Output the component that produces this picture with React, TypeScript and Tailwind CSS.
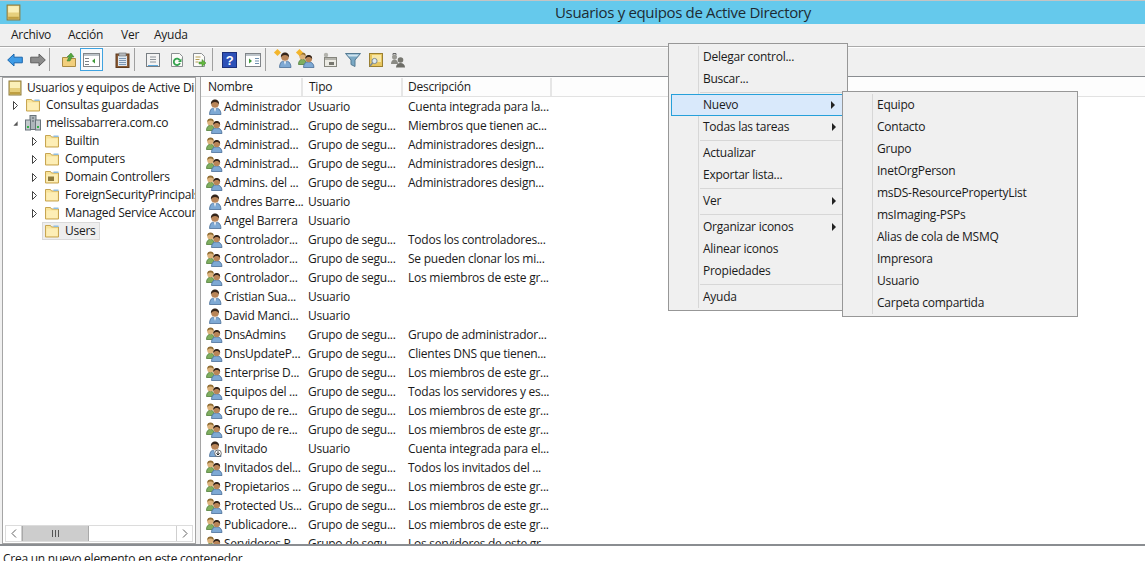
import React from 'react';

const uiFont = "font-['Open_Sans','Noto_Sans',sans-serif]";

function Vault({ size = 16 }: { size?: number }) {
  return (
    <svg width={size} height={size} viewBox="0 0 16 16" className="shrink-0">
      <rect x="2" y="1" width="12" height="14" fill="#e6cf7c" stroke="#8d7a3c" />
      <rect x="3" y="2" width="10" height="6" fill="#fbf0b8" />
      <rect x="3" y="12" width="10" height="2" fill="#bf9f42" />
    </svg>
  );
}

function Folder({ dc = false }: { dc?: boolean }) {
  return (
    <svg width="16" height="16" viewBox="0 0 16 16" className="shrink-0">
      <path d="M1.500 2.500h5l1 1.500h7v10h-13z" fill="#f9e49a" stroke="#c7a552" />
      <path d="M2.500 5.500h11v7.500h-11z" fill="#fdeeb6" />
      <path d="M9.500 2.500h5v1.500h-5z" fill="#8fbde0" />
      {dc && <rect x="4" y="7.500" width="6" height="4.500" fill="#8d7a3c" />}
    </svg>
  );
}

function Domain() {
  return (
    <svg width="16" height="16" viewBox="0 0 16 16" className="shrink-0">
      <rect x="5" y=".5" width="6" height="14" fill="#aeb6bb" stroke="#68737a" />
      <rect x=".5" y="5" width="5" height="10" fill="#c3cacd" stroke="#68737a" />
      <rect x="10.500" y="5" width="5" height="10" fill="#c3cacd" stroke="#68737a" />
      <rect x="2" y="11" width="2" height="2" fill="#35b34a" />
      <rect x="12" y="11" width="2" height="2" fill="#35b34a" />
      <rect x="7" y="2.500" width="2" height="1" fill="#566067" />
      <rect x="7" y="5.500" width="2" height="1" fill="#566067" />
    </svg>
  );
}

function UserIcon({ disabled = false }: { disabled?: boolean }) {
  return (
    <svg width="16" height="16" viewBox="0 0 16 16" className="shrink-0">
      <path d="M3.500 15.500c0-3.800 1.800-6 3-6.300l2.500 1.300 2.500-1.300c1.500.4 3.500 2.500 3.500 6.300z" fill="#7ea9d4" stroke="#4a6f98" strokeWidth="0.8" />
      <path d="M8 10l1 3 1-3z" fill="#eef3f8" />
      <circle cx="9" cy="5" r="3.800" fill="#b98558" />
      <path d="M5 5.500C4.500 2 6.800.5 9 .5s4.500 1.500 4 5c-1-2-2.400-2.600-4-2.600S6 3.500 5 5.500z" fill="#33241a" />
      {disabled && (
        <g>
          <circle cx="12" cy="12.300" r="3.300" fill="#fff" stroke="#555" strokeWidth="0.8" />
          <path d="M12 10.300v3.500M10.500 12.300l1.500 1.700 1.500-1.700" stroke="#222" fill="none" strokeWidth="1" />
        </g>
      )}
    </svg>
  );
}

function GroupIcon() {
  return (
    <svg width="17" height="16" viewBox="0 0 17 16" className="shrink-0">
      <path d="M.5 12.500c0-3.200 1.500-5.200 4-5.200s4 2 4 5.200z" fill="#7fae5f" stroke="#4f7d38" strokeWidth="0.8" />
      <circle cx="4.500" cy="4.200" r="3.200" fill="#dcb27a" />
      <path d="M1.300 4.300C1 1.500 2.700.5 4.500.5s3.500 1 3.200 3.800c-.8-1.400-1.900-1.900-3.200-1.900s-2.400.5-3.200 1.900z" fill="#8f6c32" />
      <path d="M5.500 15.500c0-3.700 1.900-5.700 5-5.700s5.500 2 5.500 5.700z" fill="#7ea9d4" stroke="#4a6f98" strokeWidth="0.8" />
      <circle cx="10.700" cy="6.800" r="3.400" fill="#b98558" />
      <path d="M7.300 7c-.3-3 1.500-4 3.400-4s3.700 1 3.400 4c-1-1.500-2-2-3.400-2s-2.400.5-3.400 2z" fill="#33241a" />
    </svg>
  );
}

function Arrow({ dir, fill, stroke }: { dir: 'l' | 'r'; fill: string; stroke: string }) {
  return (
    <svg width="16" height="14" viewBox="0 0 16 14">
      <path
        d={dir === 'l' ? 'M.7 7L7 1v3.200h8.300v5.600H7V13z' : 'M15.300 7L9 1v3.200H.7v5.600H9V13z'}
        fill={fill}
        stroke={stroke}
      />
    </svg>
  );
}

function PageTool({ children }: { children?: React.ReactNode }) {
  return (
    <svg width="16" height="16" viewBox="0 0 16 16">
      <path d="M2.500 1.500h8l3 3v10h-11z" fill="#fbfbf8" stroke="#8b8f92" />
      {children}
    </svg>
  );
}

function Star() {
  return <span className="absolute -left-[1px] -top-[2px] h-[5px] w-[5px] rotate-45 bg-[#f3b52c]" />;
}

const toolbar: { w?: number; ml?: number; node?: React.ReactNode; sep?: boolean; active?: boolean }[] = [
  { w: 23, node: <Arrow dir="l" fill="#3e9be6" stroke="#1b66ad" /> },
  { w: 23, node: <Arrow dir="r" fill="#8b8b8b" stroke="#5f5f5f" /> },
  { sep: true },
  {
    w: 23,
    ml: 7,
    node: (
      <svg width="16" height="16" viewBox="0 0 16 16">
        <path d="M1.500 5.500h5l1 1h7v8h-13z" fill="#f2cf7c" stroke="#a98a42" />
        <path d="M6 9l2-4H6l4-4 3 4h-2l-2 4z" fill="#55a63e" stroke="#35782a" strokeWidth="0.5" />
      </svg>
    ),
  },
  {
    w: 23,
    active: true,
    node: (
      <svg width="17" height="14" viewBox="0 0 17 14">
        <rect x=".5" y=".5" width="16" height="13" fill="#fff" stroke="#808488" />
        <rect x="1" y="1" width="15" height="2" fill="#bcc3c9" />
        <rect x="2" y="5" width="4" height="1" fill="#7a8086" />
        <rect x="2" y="8" width="4" height="1" fill="#7a8086" />
        <rect x="2" y="11" width="4" height="1" fill="#7a8086" />
        <path d="M12 5.500v5l-3-2.500z" fill="#3f9a3a" />
      </svg>
    ),
  },
  {
    w: 23,
    ml: 8,
    node: (
      <svg width="15" height="16" viewBox="0 0 15 16">
        <rect x="1" y="2" width="13" height="13.500" fill="#8a5a34" stroke="#5e3b1e" />
        <rect x="3" y="4" width="9" height="10" fill="#dfe8f0" />
        <rect x="4" y="1" width="7" height="3" fill="#b5b8bb" stroke="#6b6e70" strokeWidth=".6" />
        <path d="M4 6.500h7M4 8.500h7M4 10.500h7M4 12.500h7" stroke="#7d97b3" />
      </svg>
    ),
  },
  { sep: true },
  {
    w: 23,
    ml: 6,
    node: (
      <svg width="16" height="16" viewBox="0 0 16 16">
        <rect x="1.500" y="1.500" width="13" height="13" fill="#f3f3f3" stroke="#777d82" />
        <path d="M5 5h6M5 7.500h6M5 10h6" stroke="#8c9298" />
        <rect x="3" y="13" width="10" height="1" fill="#5ba6da" />
      </svg>
    ),
  },
  {
    w: 23,
    ml: 1,
    node: (
      <PageTool>
        <path d="M10.800 8.300A3.200 3.200 0 1 0 11 11" fill="none" stroke="#34a34f" strokeWidth="1.800" />
        <path d="M12.500 6.500v3.500h-3.500z" fill="#34a34f" />
      </PageTool>
    ),
  },
  {
    w: 22,
    node: (
      <PageTool>
        <path d="M4.500 5h5M4.500 7.500h4M4.500 10h3" stroke="#b59d55" />
        <path d="M8 10h3V7.500l4 3.500-4 3.500V12H8z" fill="#64b63f" stroke="#3f8a2a" strokeWidth=".5" />
      </PageTool>
    ),
  },
  { sep: true, ml: 2 },
  {
    w: 23,
    ml: 5,
    node: (
      <svg width="15" height="16" viewBox="0 0 15 16">
        <rect x=".5" y=".5" width="14" height="15" fill="#2d51b8" stroke="#1b2f7a" />
        <text x="7.500" y="13" textAnchor="middle" fontSize="13" fontWeight="700" fill="#fff" fontFamily="'Liberation Sans',sans-serif">?</text>
      </svg>
    ),
  },
  {
    w: 23,
    node: (
      <svg width="16" height="14" viewBox="0 0 16 14">
        <rect x=".5" y=".5" width="15" height="13" fill="#fff" stroke="#808488" />
        <rect x="1" y="1" width="14" height="2" fill="#bcc3c9" />
        <path d="M4 5.500v5l3-2.500z" fill="#3f9a3a" />
        <path d="M10 5.500h4M10 8h4M10 10.500h4" stroke="#6e8fb0" />
      </svg>
    ),
  },
  { sep: true, ml: 1 },
  {
    w: 23,
    ml: 6,
    node: (
      <div className="relative">
        <UserIcon />
        <Star />
      </div>
    ),
  },
  {
    w: 23,
    node: (
      <div className="relative">
        <GroupIcon />
        <Star />
      </div>
    ),
  },
  {
    w: 23,
    node: (
      <svg width="16" height="16" viewBox="0 0 16 16">
        <rect x="2.500" y="5.500" width="12" height="9" fill="#ecebe4" stroke="#85857d" />
        <rect x="3" y="6" width="11" height="2" fill="#b5b5ae" />
        <rect x="7" y="10" width="5" height="3" fill="#77776f" />
        <circle cx="4" cy="3" r="2.200" fill="#b3b3ad" />
      </svg>
    ),
  },
  {
    w: 23,
    node: (
      <svg width="16" height="16" viewBox="0 0 16 16">
        <path d="M.5 1.500h15L10 8v6.500L6 12.500V8z" fill="#7aa8c4" stroke="#557a92" />
        <path d="M2 2.500h12l-2 2H4z" fill="#cfe4ef" />
      </svg>
    ),
  },
  {
    w: 23,
    node: (
      <svg width="16" height="16" viewBox="0 0 16 16">
        <rect x="1.500" y="1.500" width="13" height="13" fill="#e8c65f" stroke="#9a7f31" />
        <rect x="4" y="3" width="9" height="7" fill="#f7e7a8" />
        <circle cx="6.500" cy="9" r="2.600" fill="#dfeaf2" stroke="#7c8a94" />
        <path d="M4.500 11L2 14" stroke="#7c8a94" strokeWidth="1.500" />
      </svg>
    ),
  },
  {
    w: 23,
    node: (
      <svg width="17" height="16" viewBox="0 0 17 16">
        <circle cx="4.500" cy="5" r="2.500" fill="#9a9a94" />
        <path d="M1 12c0-3 1.500-4.500 3.500-4.500S8 9 8 12z" fill="#8a8a84" />
        <circle cx="10.500" cy="8" r="2.800" fill="#777770" />
        <path d="M6 15.500c0-3 2-4.500 4.500-4.500s4.500 1.500 4.500 4.500z" fill="#6e6e68" />
        <path d="M3 3V1.500h3V3" fill="none" stroke="#666" />
      </svg>
    ),
  },
];

const tree = [
  { label: 'Consultas guardadas', indent: 0, icon: 'folder', arrow: 'closed' },
  { label: 'melissabarrera.com.co', indent: 0, icon: 'domain', arrow: 'open' },
  { label: 'Builtin', indent: 19, icon: 'folder', arrow: 'closed' },
  { label: 'Computers', indent: 19, icon: 'folder', arrow: 'closed' },
  { label: 'Domain Controllers', indent: 19, icon: 'dc', arrow: 'closed' },
  { label: 'ForeignSecurityPrincipals', indent: 19, icon: 'folder', arrow: 'closed' },
  { label: 'Managed Service Accounts', indent: 19, icon: 'folder', arrow: 'closed' },
  { label: 'Users', indent: 19, icon: 'folder', arrow: 'none', selected: true },
];

const G = 'Grupo de segu...';
const U = 'Usuario';
const rows: [string, string, string, string][] = [
  ['u', 'Administrador', U, 'Cuenta integrada para la...'],
  ['g', 'Administrad...', G, 'Miembros que tienen ac...'],
  ['g', 'Administrad...', G, 'Administradores design...'],
  ['g', 'Administrad...', G, 'Administradores design...'],
  ['g', 'Admins. del ...', G, 'Administradores design...'],
  ['u', 'Andres Barre...', U, ''],
  ['u', 'Angel Barrera', U, ''],
  ['g', 'Controlador...', G, 'Todos los controladores...'],
  ['g', 'Controlador...', G, 'Se pueden clonar los mi...'],
  ['g', 'Controlador...', G, 'Los miembros de este gr...'],
  ['u', 'Cristian Sua...', U, ''],
  ['u', 'David Manci...', U, ''],
  ['g', 'DnsAdmins', G, 'Grupo de administrador...'],
  ['g', 'DnsUpdateP...', G, 'Clientes DNS que tienen...'],
  ['g', 'Enterprise D...', G, 'Los miembros de este gr...'],
  ['g', 'Equipos del ...', G, 'Todas los servidores y es...'],
  ['g', 'Grupo de re...', G, 'Los miembros de este gr...'],
  ['g', 'Grupo de re...', G, 'Los miembros de este gr...'],
  ['d', 'Invitado', U, 'Cuenta integrada para el...'],
  ['g', 'Invitados del...', G, 'Todos los invitados del ...'],
  ['g', 'Propietarios ...', G, 'Los miembros de este gr...'],
  ['g', 'Protected Us...', G, 'Los miembros de este gr...'],
  ['g', 'Publicadore...', G, 'Los miembros de este gr...'],
  ['g', 'Servidores P...', G, 'Los servidores de este gr...'],
];

type Item = { label?: string; sub?: boolean; hot?: boolean; sep?: boolean };

const contextItems: Item[] = [
  { label: 'Delegar control...' },
  { label: 'Buscar...' },
  { sep: true },
  { label: 'Nuevo', sub: true, hot: true },
  { label: 'Todas las tareas', sub: true },
  { sep: true },
  { label: 'Actualizar' },
  { label: 'Exportar lista...' },
  { sep: true },
  { label: 'Ver', sub: true },
  { sep: true },
  { label: 'Organizar iconos', sub: true },
  { label: 'Alinear iconos' },
  { label: 'Propiedades' },
  { sep: true },
  { label: 'Ayuda' },
];

const newItems = [
  'Equipo',
  'Contacto',
  'Grupo',
  'InetOrgPerson',
  'msDS-ResourcePropertyList',
  'msImaging-PSPs',
  'Alias de cola de MSMQ',
  'Impresora',
  'Usuario',
  'Carpeta compartida',
];

function ContextMenu() {
  return (
    <div className="absolute left-[668px] top-[43px] w-[180px] h-[268px] border border-[#979797] bg-[#f0f0f0] pt-[2px] px-[2px]">
      <div className="absolute left-[29px] top-[2px] bottom-[2px] w-px bg-[#d7d7d7]" />
      {contextItems.map((it, i) =>
        it.sep ? (
          <div key={i} className="h-[4px] ml-[29px] flex items-center">
            <div className="h-px w-full bg-[#d7d7d7]" />
          </div>
        ) : (
          <div
            key={i}
            className={`relative h-[22px] flex items-center pr-[6px] text-[12px] text-[#1a1a1a] ${
              it.hot ? 'border border-[#26a0da] bg-[#d9e9fb] pl-[31px]' : 'pl-[32px]'
            }`}
          >
            <span className="flex-1">{it.label}</span>
            {it.sub && <span className="mr-[3px] h-0 w-0 border-y-[4px] border-l-[4px] border-y-transparent border-l-[#222]" />}
          </div>
        ),
      )}
    </div>
  );
}

function SubMenu() {
  return (
    <div className="absolute left-[842px] top-[91px] w-[236px] h-[226px] border border-[#979797] bg-[#f0f0f0] py-[2px] px-[2px]">
      <div className="absolute left-[29px] top-[2px] bottom-[2px] w-px bg-[#d7d7d7]" />
      {newItems.map((t) => (
        <div key={t} className="h-[22px] flex items-center pl-[32px] text-[12px] text-[#1a1a1a]">
          {t}
        </div>
      ))}
    </div>
  );
}

export default function App() {
  return (
    <div className={`relative h-[561px] w-[1145px] overflow-hidden bg-[#f0f0f0] text-[12px] text-[#1a1a1a] ${uiFont} tracking-[-0.25px]`}>
      {/* title bar */}
      <div className="h-[24px] border-t border-[#c4c4c4] bg-[#65c9ec] flex items-center pl-[5px] text-[15px] tracking-[-0.33px] text-[#1d2b33]">
        <Vault size={17} />
        <span className="ml-[533px]">Usuarios y equipos de Active Directory</span>
      </div>

      {/* menu */}
      <div className="h-[23px] flex items-center pl-[11px] border-b border-[#aaaaaa]">
        <span className="w-[57px]">Archivo</span>
        <span className="w-[53px]">Acción</span>
        <span className="w-[33px]">Ver</span>
        <span>Ayuda</span>
      </div>

      {/* toolbar */}
      <div className="h-[30px] flex items-start pl-[3px] border-t border-white border-b-[1px] border-b-[#8a8d91]">
        {toolbar.map((t, i) =>
          t.sep ? (
            <div key={i} className="h-[23px] w-px bg-[#a0a0a0]" style={{ marginLeft: t.ml ?? 0 }} />
          ) : (
            <div
              key={i}
              className={`flex h-[23px] items-center justify-center ${t.active ? 'border border-[#3fa3e0] bg-[#f7f9fb]' : ''}`}
              style={{ width: t.w, marginLeft: t.ml ?? 0 }}
            >
              {t.node}
            </div>
          ),
        )}
      </div>

      {/* panes */}
      <div className="flex h-[469px] pl-[2px] gap-[4px] border-b-2 border-[#8a8d91]">
        <div className="w-[194px] flex flex-col bg-white border border-[#a5a5a5] overflow-hidden">
          <div className="flex-1 overflow-hidden pt-[1px]">
            <div className="h-[17px] flex items-center pl-[4px] whitespace-nowrap">
              <Vault />
              <span className="ml-[4px]">Usuarios y equipos de Active Directory</span>
            </div>
            {tree.map((n) => (
              <div key={n.label} className="h-[18px] flex items-center whitespace-nowrap pl-[10px]" style={{ marginLeft: n.indent }}>
                <span className="flex h-[10px] w-[5px] items-center justify-center">
                  {n.arrow === 'closed' && (
                    <svg width="5" height="9" viewBox="0 0 5 9">
                      <path d="M.5.5l4 4-4 4z" fill="#fff" stroke="#444" />
                    </svg>
                  )}
                  {n.arrow === 'open' && (
                    <svg width="7" height="7" viewBox="0 0 7 7">
                      <path d="M6.500.5v6h-6z" fill="#555" />
                    </svg>
                  )}
                </span>
                <span
                  className={`ml-[5px] h-[18px] flex items-center border pl-[1px] pr-[3px] ${
                    n.selected ? 'bg-[#eeeeee] border-[#dadada]' : 'border-transparent'
                  }`}
                >
                  {n.icon === 'folder' ? <Folder /> : n.icon === 'dc' ? <Folder dc /> : <Domain />}
                  <span className="ml-[5px]">{n.label}</span>
                </span>
              </div>
            ))}
          </div>
          {/* tree scrollbar */}
          <div className="h-[17px] mb-[1px] mx-[2px] flex items-stretch border border-[#dcdcdc] bg-white text-[#606060]">
            <div className="w-[16px] flex items-center justify-center border-r border-[#cfcfcf]">
              <svg width="6" height="9" viewBox="0 0 6 9"><path d="M5 .5L1 4.500l4 4" fill="none" stroke="#606060" /></svg>
            </div>
            <div className="w-[67px] flex items-center justify-center gap-[1px] bg-[#cdcdcd] border-x border-[#a9a9a9]">
              <span className="h-[7px] w-px bg-[#555]" />
              <span className="h-[7px] w-px bg-[#555] ml-[1px]" />
              <span className="h-[7px] w-px bg-[#555] ml-[1px]" />
            </div>
            <div className="flex-1" />
            <div className="w-[16px] flex items-center justify-center border-l border-[#cfcfcf]">
              <svg width="6" height="9" viewBox="0 0 6 9"><path d="M1 .5l4 4-4 4" fill="none" stroke="#606060" /></svg>
            </div>
          </div>
        </div>

        <div className="flex-1 bg-white border-l border-[#a5a5a5] overflow-hidden">
          <div className="flex h-[20px] pt-[1px] bg-[#fdfdfd] border-b border-[#e2e2e2]">
            <div className="w-[102px] pl-[7px] border-r-[2px] border-[#e6e6e6] flex items-center">Nombre</div>
            <div className="w-[100px] pl-[6px] border-r-[2px] border-[#e6e6e6] flex items-center">Tipo</div>
            <div className="w-[149px] pl-[5px] border-r-[2px] border-[#e6e6e6] flex items-center">Descripción</div>
          </div>
          {rows.map((r, i) => (
            <div key={i} className="flex h-[19px] items-center whitespace-nowrap">
              <div className="w-[102px] pl-[5px] flex items-center">
                <span className="w-[18px] shrink-0">
                  {r[0] === 'g' ? <GroupIcon /> : <UserIcon disabled={r[0] === 'd'} />}
                </span>
                <span>{r[1]}</span>
              </div>
              <div className="w-[100px] pl-[5px]">{r[2]}</div>
              <div className="pl-[5px]">{r[3]}</div>
            </div>
          ))}
        </div>
      </div>

      {/* status bar */}
      <div className="h-[15px] bg-white pl-[3px] leading-[26px] whitespace-nowrap">Crea un nuevo elemento en este contenedor</div>

      <ContextMenu />
      <SubMenu />
    </div>
  );
}
